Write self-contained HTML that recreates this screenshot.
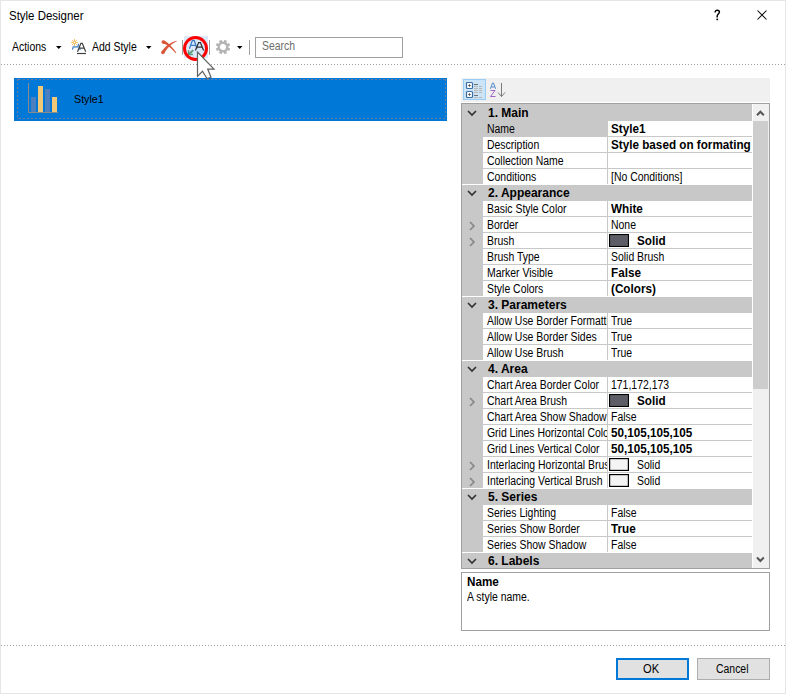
<!DOCTYPE html>
<html><head><meta charset="utf-8">
<style>
*{margin:0;padding:0;box-sizing:border-box}
html,body{width:786px;height:694px;overflow:hidden;background:#fff}
body{position:relative;font-family:"Liberation Sans",sans-serif;font-size:12px;color:#000}
.a{position:absolute}
.t{position:absolute;white-space:nowrap;line-height:14px}
.rt{display:inline-block;transform:scaleX(0.87);transform-origin:0 0;font-size:12px}
.bt{display:inline-block;transform:scaleX(0.975);transform-origin:0 0;font-size:12px;font-weight:bold}
.fr{position:absolute;background:repeating-linear-gradient(90deg,#5e7fae 0 2px,transparent 2px 4px);background-position:2px 0}
.fr.v{background:repeating-linear-gradient(180deg,#5e7fae 0 2px,transparent 2px 4px)}
.dots{position:absolute;height:1px;background:repeating-linear-gradient(90deg,#a0a0a0 0 1px,transparent 1px 3px)}
.row{position:absolute;left:462px;width:290px;height:16px}
.lab{position:absolute;left:21px;top:0;width:124px;height:16px;border-top:1px solid #c8c8c8;background:#fff;overflow:hidden}
.lab.sel{background:#c8c8c8}
.val{position:absolute;left:145px;top:0;width:145px;height:16px;border-top:1px solid #c8c8c8;border-left:1px solid #c8c8c8;background:#fff;overflow:hidden}
.lab span,.val span{position:absolute;left:4px;top:1px;line-height:14px;white-space:nowrap}
.val span{left:3px}
.cat{position:absolute;left:462px;width:290px;height:16px;background:#c8c8c8;border-top:1px solid #fff}
.cat span{position:absolute;left:26px;top:1px;line-height:14px;white-space:nowrap;transform:scaleX(1.0)}
.chev{position:absolute;left:5px;top:5px}
.exp{position:absolute;left:6.5px;top:4.5px}
.sw{position:absolute;left:1px;top:1px;width:20px;height:13px;border:1px solid #000;box-shadow:inset 0 0 0 0.3px #444}
</style></head>
<body>
<div class="a" style="left:0;top:0;width:786px;height:1px;background:#e6e6e6"></div>
<div class="a" style="left:0;top:0;width:1px;height:694px;background:#e6e6e6"></div>
<div class="a" style="left:785px;top:0;width:1px;height:694px;background:#e6e6e6"></div>
<div class="a" style="left:0;top:693px;width:786px;height:1px;background:#e6e6e6"></div>

<div class="t" style="left:9px;top:9px;font-size:12px;line-height:14px"><span style="display:inline-block;transform:scaleX(0.955);transform-origin:0 0">Style Designer</span></div>
<svg class="a" style="left:713px;top:9px" width="9" height="12" viewBox="0 0 9 12"><path d="M2.1 3.4C2.1 1.9 3.1 1.3 4.3 1.3C5.6 1.3 6.4 2.1 6.4 3.1C6.4 4.2 5.5 4.8 4.9 5.4C4.4 5.9 4.2 6.5 4.2 7.3V8.4" fill="none" stroke="#000" stroke-width="1.45"/><rect x="3.4" y="9.6" width="1.7" height="1.6" fill="#000"/></svg>
<svg class="a" style="left:757px;top:10px" width="11" height="11" viewBox="0 0 11 11"><path d="M0.5 0.5L9.5 9.5M9.5 0.5L0.5 9.5" stroke="#000" stroke-width="1.05"/></svg>

<div class="t" style="left:12px;top:40px"><span class="rt">Actions</span></div>
<svg class="a" style="left:56px;top:46px" width="6" height="3"><path d="M0 0H5.5L2.75 3Z" fill="#000"/></svg>
<svg class="a" style="left:70px;top:38px" width="18" height="17" viewBox="0 0 18 17">
 <g stroke="#f2c46a" stroke-width="1" fill="none"><path d="M4.5 1V8M1 4.5H8M2.1 2.1L6.9 6.9M6.9 2.1L2.1 6.9"/></g>
 <circle cx="4.5" cy="4.5" r="1.9" fill="#f2c46a"/><circle cx="4.5" cy="4.5" r="0.8" fill="#fff"/>
 <path d="M2.4 11.6L3.3 8.8H8L8.5 5.8M9.2 10.8L10.5 11.8" stroke="#3a7cc7" stroke-width="1.2" fill="none"/>
 <path d="M7.5 13.7L10.9 5.3H12.3L15.7 13.7M9 10.2H14.2" stroke="#404040" stroke-width="1.2" fill="none"/>
 <path d="M7 15.5H16" stroke="#404040" stroke-width="1.2"/>
</svg>
<div class="t" style="left:92px;top:40px"><span class="rt">Add Style</span></div>
<svg class="a" style="left:146px;top:46px" width="6" height="3"><path d="M0 0H5.5L2.75 3Z" fill="#000"/></svg>

<svg class="a" style="left:160px;top:40px" width="18" height="15" viewBox="0 0 18 15">
 <g fill="#d9573a"><path d="M2.79 3.65 L3.53 3.77 L4.36 4.00 L5.25 4.36 L6.22 4.85 L7.24 5.46 L8.32 6.20 L9.44 7.06 L10.61 8.05 L11.82 9.17 L13.07 10.40 L14.36 11.76 L15.69 13.25 L16.31 12.75 L15.14 11.12 L14.00 9.60 L12.88 8.18 L11.79 6.88 L10.73 5.69 L9.68 4.60 L8.66 3.63 L7.65 2.75 L6.65 1.99 L5.64 1.33 L4.64 0.78 L3.61 0.35Z"/><circle cx="3.2" cy="2.0" r="1.7"/>
 <path d="M4.23 13.51 L5.04 12.11 L5.88 10.79 L6.77 9.53 L7.69 8.35 L8.66 7.24 L9.67 6.21 L10.73 5.24 L11.83 4.34 L12.98 3.52 L14.18 2.77 L15.43 2.09 L16.73 1.48 L16.47 0.72 L15.04 1.15 L13.64 1.66 L12.27 2.26 L10.92 2.95 L9.61 3.72 L8.33 4.59 L7.08 5.55 L5.86 6.60 L4.68 7.74 L3.54 8.97 L2.43 10.28 L1.37 11.69Z"/><circle cx="2.8" cy="12.6" r="1.7"/></g>
</svg>
<div class="a" style="left:182px;top:40px;width:1px;height:15px;background:#a0a0a0"></div>
<div class="a" style="left:184px;top:36px;width:24px;height:22px;background:#dbe9fb"></div>
<svg class="a" style="left:183px;top:35px" width="26" height="27" viewBox="0 0 26 27">
 <path d="M6.4 13.7L9.3 5.6H11.3L14 13.7M7.8 10.4H12.8" stroke="#3a7cc7" stroke-width="1.25" fill="none"/>
 <path d="M12.4 15.6L15.6 7.6H17.4L20.6 15.6M14 12H19" stroke="#333" stroke-width="1.25" fill="none"/>
 <path d="M10.2 15.1L6.2 18.9" stroke="#5b9a7a" stroke-width="2" fill="none"/>
 <path d="M5.6 15.3V19.4H9.9" stroke="#5b9a7a" stroke-width="1.5" fill="none"/>
 <circle cx="12.5" cy="13.5" r="11" stroke="#ff0000" stroke-width="3" fill="none"/>
</svg>
<div class="a" style="left:209px;top:40px;width:1px;height:15px;background:#a0a0a0"></div>
<svg class="a" style="left:215px;top:39px" width="16" height="16" viewBox="0 0 16 16">
 <g transform="translate(8 8) rotate(22.5)" fill="#b4b4b4">
  <circle r="5.5"/>
  <rect x="-1.4" y="-7.2" width="2.8" height="14.4"/>
  <rect x="-7.2" y="-1.4" width="14.4" height="2.8"/>
  <rect x="-1.4" y="-7.2" width="2.8" height="14.4" transform="rotate(45)"/>
  <rect x="-1.4" y="-7.2" width="2.8" height="14.4" transform="rotate(-45)"/>
  <circle r="3.1" fill="#fff"/>
 </g>
</svg>
<svg class="a" style="left:237px;top:46px" width="6" height="3"><path d="M0 0H5.5L2.75 3Z" fill="#000"/></svg>
<div class="a" style="left:249px;top:40px;width:1px;height:15px;background:#a0a0a0"></div>
<div class="a" style="left:255px;top:37px;width:148px;height:21px;border:1px solid #a0a0a0;background:#fff"></div>
<div class="t" style="left:262px;top:39px;color:#6d6d6d"><span class="rt">Search</span></div>

<div class="dots" style="left:1px;top:64px;width:784px"></div>

<div class="a" style="left:14px;top:78px;width:433px;height:43px;background:#0078d7"></div>
<div class="fr" style="left:17px;top:79px;width:429px;height:1px"></div><div class="fr" style="left:17px;top:118px;width:429px;height:1px"></div><div class="fr v" style="left:17px;top:79px;width:1px;height:40px"></div><div class="fr v" style="left:445px;top:79px;width:1px;height:40px"></div>
<svg class="a" style="left:27px;top:82px" width="32" height="32" viewBox="0 0 32 32">
 <rect x="4" y="15" width="5" height="15" fill="#4a7fc0"/>
 <rect x="11" y="4" width="5" height="26" fill="#f0c878"/>
 <rect x="18" y="7" width="5" height="23" fill="#4a7fc0"/>
 <rect x="25" y="15" width="5" height="15" fill="#f0c878"/>
 <path d="M1.5 1V30.5H31" stroke="#8a8a8a" stroke-width="1" fill="none"/>
</svg>
<div class="t" style="left:74px;top:92px;color:#000"><span class="rt" style="font-size:11.5px;transform:scaleX(0.93)">Style1</span></div>

<div class="a" style="left:461px;top:78px;width:309px;height:24px;background:#f0f0f0"></div>
<div class="a" style="left:463px;top:79px;width:23px;height:21px;background:#cce4f7;border:1px solid #99ccf5"></div>
<svg class="a" style="left:465px;top:81px" width="20" height="18" viewBox="0 0 20 18">
 <rect x="1.5" y="1.5" width="6" height="6" rx="1" fill="#fff" stroke="#3a6ea5" stroke-width="1.2"/>
 <rect x="1.5" y="10.5" width="6" height="6" rx="1" fill="#fff" stroke="#3a6ea5" stroke-width="1.2"/>
 <path d="M4.5 3.2V5.8M3.2 4.5H5.8M4.5 12.2V14.8M3.2 13.5H5.8" stroke="#555" stroke-width="0.9"/>
 <path d="M9 3.5H13M9 14.5H13" stroke="#707070" stroke-width="1"/>
 <path d="M9 5.5H13M14 5.5H17M9 7.5H13M14 7.5H17M9 9.5H13M14 9.5H17M9 11.5H13M14 11.5H17M9 16.5H13M14 16.5H17" stroke="#b8b0a8" stroke-width="0.9"/>
</svg>
<svg class="a" style="left:488px;top:81px" width="20" height="18" viewBox="0 0 20 18">
 <path d="M2.4 7.8L4.5 2H5.5L7.6 7.8M3.3 6H6.7" stroke="#4a86c8" stroke-width="0.95" fill="none"/>
 <path d="M2.5 9.5H7L2.5 15.5H7.5" stroke="#9c5cc0" stroke-width="0.95" fill="none"/>
 <path d="M13.5 2V15.5M10 11.5L13.5 15.5L17 11.5" stroke="#7a7a7a" stroke-width="1" fill="none"/>
</svg>

<div class="a" style="left:461px;top:103px;width:309px;height:466px;border:1px solid #a0a0a0;background:#fff"></div>
<div class="a" style="left:462px;top:104px;width:21px;height:464px;background:#c8c8c8"></div>
<div class="cat" style="top:104px;border-top-color:#c8c8c8"><svg class="chev" width="10" height="7" viewBox="0 0 10 7"><path d="M1 1L5 5L9 1" fill="none" stroke="#333" stroke-width="1.7"/></svg><span class="bt">1. Main</span></div>
<div class="row" style="top:120px"><div class="lab sel"><span class="rt">Name</span></div><div class="val"><span class="bt">Style1</span></div></div>
<div class="row" style="top:136px"><div class="lab"><span class="rt">Description</span></div><div class="val"><span class="bt">Style based on formating</span></div></div>
<div class="row" style="top:152px"><div class="lab"><span class="rt">Collection Name</span></div><div class="val"><span class="rt"></span></div></div>
<div class="row" style="top:168px"><div class="lab"><span class="rt">Conditions</span></div><div class="val"><span class="rt">[No Conditions]</span></div></div>
<div class="cat" style="top:184px"><svg class="chev" width="10" height="7" viewBox="0 0 10 7"><path d="M1 1L5 5L9 1" fill="none" stroke="#333" stroke-width="1.7"/></svg><span class="bt">2. Appearance</span></div>
<div class="row" style="top:200px"><div class="lab"><span class="rt">Basic Style Color</span></div><div class="val"><span class="bt">White</span></div></div>
<div class="row" style="top:216px"><svg class="exp" width="7" height="10" viewBox="0 0 7 10"><path d="M1 1L5 5L1 9" fill="none" stroke="#858585" stroke-width="1.6"/></svg><div class="lab"><span class="rt">Border</span></div><div class="val"><span class="rt">None</span></div></div>
<div class="row" style="top:232px"><svg class="exp" width="7" height="10" viewBox="0 0 7 10"><path d="M1 1L5 5L1 9" fill="none" stroke="#858585" stroke-width="1.6"/></svg><div class="lab"><span class="rt">Brush</span></div><div class="val"><i class="sw" style="background:#5c5d66"></i><span class="bt" style="left:29px">Solid</span></div></div>
<div class="row" style="top:248px"><div class="lab"><span class="rt">Brush Type</span></div><div class="val"><span class="rt">Solid Brush</span></div></div>
<div class="row" style="top:264px"><div class="lab"><span class="rt">Marker Visible</span></div><div class="val"><span class="bt">False</span></div></div>
<div class="row" style="top:280px"><div class="lab"><span class="rt">Style Colors</span></div><div class="val"><span class="bt">(Colors)</span></div></div>
<div class="cat" style="top:296px"><svg class="chev" width="10" height="7" viewBox="0 0 10 7"><path d="M1 1L5 5L9 1" fill="none" stroke="#333" stroke-width="1.7"/></svg><span class="bt">3. Parameters</span></div>
<div class="row" style="top:312px"><div class="lab"><span class="rt">Allow Use Border Formatting</span></div><div class="val"><span class="rt">True</span></div></div>
<div class="row" style="top:328px"><div class="lab"><span class="rt">Allow Use Border Sides</span></div><div class="val"><span class="rt">True</span></div></div>
<div class="row" style="top:344px"><div class="lab"><span class="rt">Allow Use Brush</span></div><div class="val"><span class="rt">True</span></div></div>
<div class="cat" style="top:360px"><svg class="chev" width="10" height="7" viewBox="0 0 10 7"><path d="M1 1L5 5L9 1" fill="none" stroke="#333" stroke-width="1.7"/></svg><span class="bt">4. Area</span></div>
<div class="row" style="top:376px"><div class="lab"><span class="rt">Chart Area Border Color</span></div><div class="val"><span class="rt">171,172,173</span></div></div>
<div class="row" style="top:392px"><svg class="exp" width="7" height="10" viewBox="0 0 7 10"><path d="M1 1L5 5L1 9" fill="none" stroke="#858585" stroke-width="1.6"/></svg><div class="lab"><span class="rt">Chart Area Brush</span></div><div class="val"><i class="sw" style="background:#5c5d66"></i><span class="bt" style="left:29px">Solid</span></div></div>
<div class="row" style="top:408px"><div class="lab"><span class="rt">Chart Area Show Shadow</span></div><div class="val"><span class="rt">False</span></div></div>
<div class="row" style="top:424px"><div class="lab"><span class="rt">Grid Lines Horizontal Color</span></div><div class="val"><span class="bt">50,105,105,105</span></div></div>
<div class="row" style="top:440px"><div class="lab"><span class="rt">Grid Lines Vertical Color</span></div><div class="val"><span class="bt">50,105,105,105</span></div></div>
<div class="row" style="top:456px"><svg class="exp" width="7" height="10" viewBox="0 0 7 10"><path d="M1 1L5 5L1 9" fill="none" stroke="#858585" stroke-width="1.6"/></svg><div class="lab"><span class="rt">Interlacing Horizontal Brush</span></div><div class="val"><i class="sw" style="background:#f4f4f4"></i><span class="rt" style="left:29px">Solid</span></div></div>
<div class="row" style="top:472px"><svg class="exp" width="7" height="10" viewBox="0 0 7 10"><path d="M1 1L5 5L1 9" fill="none" stroke="#858585" stroke-width="1.6"/></svg><div class="lab"><span class="rt">Interlacing Vertical Brush</span></div><div class="val"><i class="sw" style="background:#f4f4f4"></i><span class="rt" style="left:29px">Solid</span></div></div>
<div class="cat" style="top:488px"><svg class="chev" width="10" height="7" viewBox="0 0 10 7"><path d="M1 1L5 5L9 1" fill="none" stroke="#333" stroke-width="1.7"/></svg><span class="bt">5. Series</span></div>
<div class="row" style="top:504px"><div class="lab"><span class="rt">Series Lighting</span></div><div class="val"><span class="rt">False</span></div></div>
<div class="row" style="top:520px"><div class="lab"><span class="rt">Series Show Border</span></div><div class="val"><span class="bt">True</span></div></div>
<div class="row" style="top:536px"><div class="lab"><span class="rt">Series Show Shadow</span></div><div class="val"><span class="rt">False</span></div></div>
<div class="cat" style="top:552px"><svg class="chev" width="10" height="7" viewBox="0 0 10 7"><path d="M1 1L5 5L9 1" fill="none" stroke="#333" stroke-width="1.7"/></svg><span class="bt">6. Labels</span></div>
<div class="a" style="left:752px;top:104px;width:1px;height:464px;background:#fff"></div>
<div class="a" style="left:753px;top:104px;width:16px;height:464px;background:#f0f0f0"></div>
<div class="a" style="left:753px;top:121px;width:15px;height:268px;background:#cdcdcd"></div>
<svg class="a" style="left:756px;top:110px" width="10" height="7" viewBox="0 0 10 7"><path d="M1 5.3L4.4 1.8L7.8 5.3" fill="none" stroke="#555" stroke-width="2"/></svg>
<svg class="a" style="left:756px;top:556px" width="10" height="8" viewBox="0 0 10 8"><path d="M1 1.5L4.4 5L7.8 1.5" fill="none" stroke="#555" stroke-width="2"/></svg>

<div class="a" style="left:461px;top:572px;width:309px;height:59px;border:1px solid #a0a0a0;background:#fff"></div>
<div class="t" style="left:467px;top:575px"><span class="bt">Name</span></div>
<div class="t" style="left:467px;top:590px"><span class="rt">A style name.</span></div>

<div class="dots" style="left:1px;top:645px;width:784px"></div>

<div class="a" style="left:616px;top:658px;width:73px;height:22px;background:#e1e1e1;border:2px solid #0078d7"></div>
<div class="t" style="left:643px;top:662px"><span class="rt" style="transform:scaleX(0.93)">OK</span></div>
<div class="a" style="left:697px;top:658px;width:73px;height:22px;background:#e1e1e1;border:1px solid #adadad"></div>
<div class="t" style="left:716px;top:662px"><span class="rt">Cancel</span></div>

<svg class="a" style="left:196px;top:51px" width="20" height="28" viewBox="0 0 20 28">
 <path d="M1.5 1V25.4L6.5 20.3L11 27.5L15 26.2L11.7 18.1H18Z" fill="#fff" stroke="#606060" stroke-width="1.2" stroke-linejoin="miter"/>
</svg>
</body></html>
